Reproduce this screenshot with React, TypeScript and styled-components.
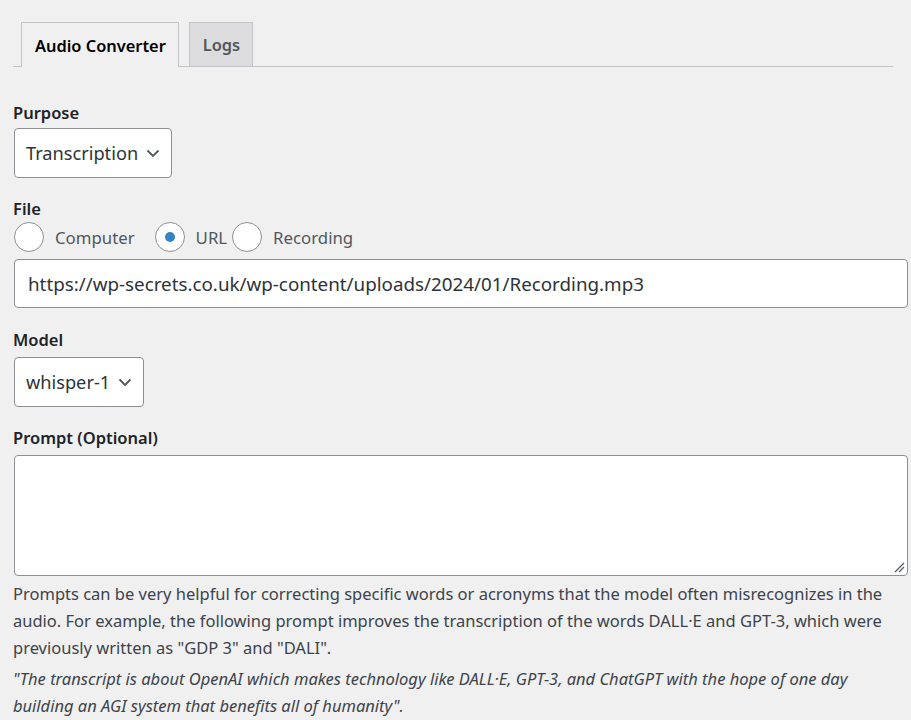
import styled, { createGlobalStyle } from "styled-components";

const GlobalStyle = createGlobalStyle`
  html, body {
    margin: 0;
    padding: 0;
    background: #f0f0f1;
  }
  body {
    font-family: "Noto Sans", "Open Sans", sans-serif;
    color: #3c434a;
  }
`;

const Page = styled.div`
  padding: 22px 3px 0 13px;
  box-sizing: border-box;
  width: 911px;
`;

const TabBar = styled.nav`
  display: flex;
  gap: 10px;
  padding-left: 8px;
  margin-right: 15px;
  border-bottom: 1px solid #c3c4c7;
  height: 44px;
`;

const Tab = styled.a<{ $active?: boolean }>`
  display: flex;
  align-items: center;
  padding: 0 12px 0 13px;
  box-sizing: border-box;
  border: 1px solid #c3c4c7;
  border-bottom: none;
  margin-bottom: ${(p) => (p.$active ? "-1px" : "0")};
  height: ${(p) => (p.$active ? "45px" : "44px")};
  background: ${(p) => (p.$active ? "#f0f0f1" : "#dcdcde")};
  color: ${(p) => (p.$active ? "#000" : "#50575e")};
  font-size: 16.4px;
  font-weight: 600;
  text-decoration: none;
  cursor: pointer;
`;

const Form = styled.form`
  display: flex;
  flex-direction: column;
  padding-top: 34px;
`;

const Field = styled.div<{ $gap?: number }>`
  display: flex;
  flex-direction: column;
  align-items: flex-start;
  margin-bottom: ${(p) => p.$gap ?? 0}px;
`;

const Label = styled.label<{ $gap?: number }>`
  font-size: 16.5px;
  font-weight: 600;
  color: #1d2327;
  line-height: 24px;
  margin-bottom: ${(p) => p.$gap ?? 3}px;
`;

const SelectBox = styled.div`
  display: inline-flex;
  align-items: center;
  height: 50px;
  box-sizing: border-box;
  margin-left: 1px;
  padding: 0 11px;
  gap: 8px;
  background: #fff;
  border: 1px solid #8c8f94;
  border-radius: 4px;
  font-size: 18.2px;
  color: #2c3338;
`;

const Chevron = () => (
  <svg width="14" height="9" viewBox="0 0 14 9" fill="none">
    <path d="M1.5 1.5 7 7l5.5-5.5" stroke="#50575e" strokeWidth="1.8" />
  </svg>
);

const RadioRow = styled.div`
  display: flex;
  align-items: center;
  height: 32px;
  margin-left: 1px;
`;

const RadioOption = styled.label<{ $space: number }>`
  display: flex;
  align-items: center;
  font-size: 16.8px;
  color: #50575e;
  margin-right: ${(p) => p.$space}px;
`;

const RadioCircle = styled.span<{ $checked?: boolean }>`
  width: 30px;
  height: 30px;
  box-sizing: border-box;
  border-radius: 50%;
  border: 1px solid #8c8f94;
  background: #fff;
  display: flex;
  align-items: center;
  justify-content: center;
  margin-right: 11px;

  &::after {
    content: "";
    display: ${(p) => (p.$checked ? "block" : "none")};
    width: 10px;
    height: 10px;
    border-radius: 50%;
    background: #3582c4;
  }
`;

const TextInput = styled.div`
  display: flex;
  align-items: center;
  width: 894px;
  height: 49px;
  box-sizing: border-box;
  margin: 6px 0 0 1px;
  padding: 0 13px;
  background: #fff;
  border: 1px solid #8c8f94;
  border-radius: 4px;
  font-size: 18.8px;
  color: #2c3338;
`;

const TextArea = styled.div`
  position: relative;
  width: 894px;
  height: 121px;
  box-sizing: border-box;
  margin-left: 1px;
  background: #fff;
  border: 1px solid #8c8f94;
  border-radius: 4px;
`;

const Grip = styled.svg`
  position: absolute;
  right: 2px;
  bottom: 2px;
`;

const Notes = styled.div`
  display: flex;
  flex-direction: column;
  gap: 4px;
  padding-top: 4px;
  max-width: 890px;
`;

const Description = styled.p<{ $italic?: boolean }>`
  margin: 0;
  font-size: 16.5px;
  line-height: 27px;
  color: #3c434a;
  font-style: ${(p) => (p.$italic ? "italic" : "normal")};
`;

export default function App() {
  return (
    <>
      <GlobalStyle />
      <Page>
        <TabBar>
          <Tab $active>Audio Converter</Tab>
          <Tab>Logs</Tab>
        </TabBar>

        <Form onSubmit={(e) => e.preventDefault()}>
          <Field $gap={19}>
            <Label>Purpose</Label>
            <SelectBox>
              Transcription
              <Chevron />
            </SelectBox>
          </Field>

          <Field $gap={20}>
            <Label $gap={0}>File</Label>
            <RadioRow>
              <RadioOption $space={20}>
                <RadioCircle />
                Computer
              </RadioOption>
              <RadioOption $space={5}>
                <RadioCircle $checked />
                URL
              </RadioOption>
              <RadioOption $space={0}>
                <RadioCircle />
                Recording
              </RadioOption>
            </RadioRow>
            <TextInput>https://wp-secrets.co.uk/wp-content/uploads/2024/01/Recording.mp3</TextInput>
          </Field>

          <Field $gap={19}>
            <Label $gap={5}>Model</Label>
            <SelectBox>
              whisper-1
              <Chevron />
            </SelectBox>
          </Field>

          <Field>
            <Label $gap={5}>Prompt (Optional)</Label>
            <TextArea>
              <Grip width="11" height="11" viewBox="0 0 11 11">
                <path d="M10 1 1 10M10 5 5 10" stroke="#50575e" strokeWidth="1.2" />
              </Grip>
            </TextArea>
          </Field>

          <Notes>
            <Description>
              Prompts can be very helpful for correcting specific words or acronyms that the model often
              misrecognizes in the audio. For example, the following prompt improves the transcription of the
              words DALL·E and GPT-3, which were previously written as "GDP 3" and "DALI".
            </Description>
            <Description $italic>
              "The transcript is about OpenAI which makes technology like DALL·E, GPT-3, and ChatGPT with the hope
              of one day building an AGI system that benefits all of humanity".
            </Description>
          </Notes>
        </Form>
      </Page>
    </>
  );
}
